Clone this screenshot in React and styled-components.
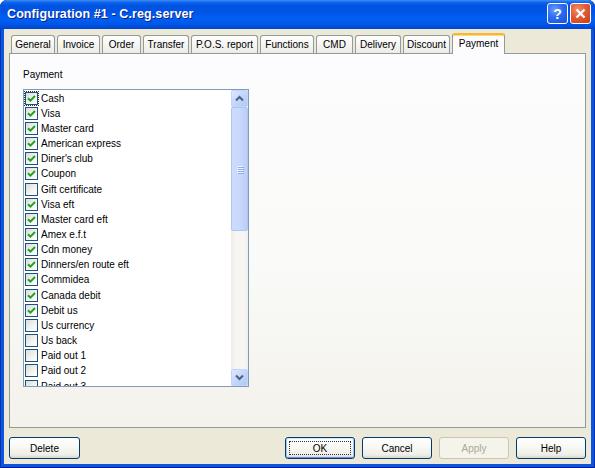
import React from "react";
import styled, { createGlobalStyle, css } from "styled-components";

const GlobalStyle = createGlobalStyle`
  html, body { margin: 0; padding: 0; background: #ffffff; }
  body { font-family: "Liberation Sans", Arial, sans-serif; }
  * { box-sizing: border-box; }
`;

const Window = styled.div`
  width: 595px;
  height: 468px;
  display: flex;
  flex-direction: column;
  background: #0a55e2;
  border-radius: 7px 7px 0 0;
  box-shadow: inset 1px 0 #0831a8, inset -1px 0 #0831a8, inset 0 -1px #00138c;
  overflow: hidden;
`;

const TitleBar = styled.div`
  height: 29px;
  flex: 0 0 29px;
  display: flex;
  align-items: center;
  justify-content: space-between;
  padding: 0 4px 0 7px;
  border-radius: 7px 7px 0 0;
  background: linear-gradient(
    to bottom,
    #3d8ff9 0%,
    #0d62ea 9%,
    #0053e2 20%,
    #0056e8 45%,
    #0160f2 62%,
    #0057ea 82%,
    #0045cf 100%
  );
`;

const Title = styled.div`
  color: #ffffff;
  font-family: "Liberation Sans", Arial, sans-serif;
  font-weight: bold;
  font-size: 12.5px;
  letter-spacing: 0.1px;
  text-shadow: 1px 1px 0 #0b2190;
  padding-bottom: 1px;
`;

const Controls = styled.div`
  display: flex;
  gap: 2px;
  padding-bottom: 2px;
`;

const CapButton = styled.div`
  width: 21px;
  height: 21px;
  border: 1px solid #ffffff;
  border-radius: 3px;
  display: flex;
  align-items: center;
  justify-content: center;
  color: #ffffff;
  font-weight: bold;
  font-size: 14px;
  ${(p) =>
    p.$kind === "close"
      ? css`
          background: radial-gradient(circle at 35% 30%, #f0906c 0%, #e35b35 45%, #c53c12 100%);
        `
      : css`
          background: radial-gradient(circle at 35% 30%, #6b9cf8 0%, #2a6cf0 45%, #1c4fd6 100%);
        `}
`;

const Client = styled.div`
  flex: 1;
  margin: 0 4px 4px 4px;
  background: #ece9d8;
  display: flex;
  flex-direction: column;
  padding: 0 5px;
`;

const TabStrip = styled.div`
  display: flex;
  align-items: flex-end;
  height: 24px;
  padding-left: 2px;
  position: relative;
  z-index: 2;
`;

const Tab = styled.div`
  width: ${(p) => p.$w}px;
  height: 18px;
  margin-right: 2px;
  border: 1px solid #919b9c;
  border-bottom: none;
  border-radius: 3px 3px 0 0;
  background: linear-gradient(to bottom, #ffffff 0%, #f7f7f4 40%, #ecebe6 100%);
  font-size: 10px;
  color: #000000;
  display: flex;
  align-items: center;
  justify-content: center;
  white-space: nowrap;
  ${(p) =>
    p.$active &&
    css`
      height: 21px;
      margin-bottom: -1px;
      background: #fcfcfe;
      border-top: 2px solid #f5b73c;
      align-items: flex-start;
      padding-top: 3px;
      box-shadow: inset 0 1px 0 #ffd87a;
    `}
`;

const Panel = styled.div`
  height: 375px;
  border: 1px solid #919b9c;
  background: linear-gradient(to bottom, #fcfcfe 0%, #fafaf8 55%, #f3f2ec 100%);
  padding: 15px 0 0 13px;
  display: flex;
  flex-direction: column;
  position: relative;
  z-index: 1;
`;

const GroupLabel = styled.div`
  font-size: 10px;
  line-height: 12px;
  color: #000;
  margin-bottom: 8px;
`;

const ListBox = styled.div`
  width: 226px;
  height: 298px;
  border: 1px solid #7f9db9;
  background: #ffffff;
  display: flex;
`;

const Items = styled.div`
  flex: 1;
  overflow: hidden;
  padding-top: 0.5px;
`;

const Row = styled.div`
  height: 15.17px;
  display: flex;
  align-items: center;
  padding-left: 1px;
  gap: 3px;
  font-size: 10px;
  color: #000;
  white-space: nowrap;
`;

const Box = styled.div`
  width: 13px;
  height: 13px;
  flex: 0 0 13px;
  border: 1px solid #1c5180;
  background: linear-gradient(135deg, #dcdcd7 0%, #f2f2ee 55%, #ffffff 100%);
  display: flex;
  align-items: center;
  justify-content: center;
  position: relative;
  ${(p) =>
    p.$focus &&
    css`
      outline: 1px dotted #333;
      outline-offset: 0px;
    `}
`;

const ScrollBar = styled.div`
  width: 17px;
  flex: 0 0 17px;
  display: flex;
  flex-direction: column;
  background: linear-gradient(to right, #eeede5 0%, #f7f6f2 30%, #f7f6f2 80%, #efeee8 100%);
`;

const ScrollBtn = styled.div`
  width: 17px;
  height: 17px;
  flex: 0 0 17px;
  border: 1px solid #c3d3fd;
  border-radius: 2px;
  background: linear-gradient(135deg, #dfe9ff 0%, #c4d6fc 50%, #b2c8f6 100%);
  display: flex;
  align-items: center;
  justify-content: center;
`;

const Track = styled.div`
  flex: 1;
  display: flex;
  flex-direction: column;
`;

const Thumb = styled.div`
  height: 124px;
  border: 1px solid #b1c5f3;
  border-radius: 2px;
  background: linear-gradient(to right, #cddbfd 0%, #c9d9fc 50%, #bccef8 100%);
  display: flex;
  flex-direction: column;
  align-items: center;
  justify-content: center;
  gap: 1px;
`;

const Grip = styled.div`
  width: 6px;
  height: 1px;
  background: #eef3ff;
  box-shadow: 1px 1px 0 #8faaf0;
`;

const ButtonRow = styled.div`
  display: flex;
  gap: 7px;
  margin-top: 9px;
`;

const Spacer = styled.div`
  flex: 1;
`;

const Btn = styled.div`
  width: ${(p) => p.$w || 70}px;
  height: 22px;
  border: 1px solid #003c74;
  border-radius: 3px;
  background: linear-gradient(to bottom, #ffffff 0%, #f7f7f3 50%, #eeede6 85%, #d8d3c7 100%);
  font-size: 10px;
  color: #000;
  display: flex;
  align-items: center;
  justify-content: center;
  position: relative;
  ${(p) =>
    p.$default &&
    css`
      box-shadow: inset 0 1px 0 #cee7ff, inset 1px 0 #a7c3f2, inset -1px 0 #a7c3f2, inset 0 -1px 0 #6982ee;
      &::after {
        content: "";
        position: absolute;
        inset: 3px;
        border: 1px dotted #333;
      }
    `}
  ${(p) =>
    p.$disabled &&
    css`
      border-color: #c9c7ba;
      background: #f5f4ea;
      color: #aca899;
    `}
`;

const tabs = [
  ["General", 44],
  ["Invoice", 43],
  ["Order", 39],
  ["Transfer", 46],
  ["P.O.S. report", 67],
  ["Functions", 54],
  ["CMD", 37],
  ["Delivery", 46],
  ["Discount", 47],
  ["Payment", 53, true],
];

const items = [
  ["Cash", true],
  ["Visa", true],
  ["Master card", true],
  ["American express", true],
  ["Diner's club", true],
  ["Coupon", true],
  ["Gift certificate", false],
  ["Visa eft", true],
  ["Master card eft", true],
  ["Amex e.f.t", true],
  ["Cdn money", true],
  ["Dinners/en route eft", true],
  ["Commidea", true],
  ["Canada debit", true],
  ["Debit us", true],
  ["Us currency", false],
  ["Us back", false],
  ["Paid out 1", false],
  ["Paid out 2", false],
  ["Paid out 3", false],
];

const Check = () => (
  <svg width="9" height="9" viewBox="0 0 9 9">
    <path d="M1 4.2 L3.4 6.6 L8 2" fill="none" stroke="#21a121" strokeWidth="2" />
  </svg>
);

const Chevron = ({ down }) => (
  <svg width="9" height="7" viewBox="0 0 9 7">
    <path
      d={down ? "M1 1.5 L4.5 5 L8 1.5" : "M1 5.5 L4.5 2 L8 5.5"}
      fill="none"
      stroke="#4d6185"
      strokeWidth="2"
    />
  </svg>
);

export default function App() {
  return (
    <>
      <GlobalStyle />
      <Window>
        <TitleBar>
          <Title>Configuration #1 - C.reg.server</Title>
          <Controls>
            <CapButton $kind="help">?</CapButton>
            <CapButton $kind="close">
              <svg width="11" height="11" viewBox="0 0 11 11">
                <path d="M1.5 1.5 L9.5 9.5 M9.5 1.5 L1.5 9.5" stroke="#fff" strokeWidth="2.2" />
              </svg>
            </CapButton>
          </Controls>
        </TitleBar>
        <Client>
          <TabStrip>
            {tabs.map(([label, w, active]) => (
              <Tab key={label} $w={w} $active={active}>
                {label}
              </Tab>
            ))}
          </TabStrip>
          <Panel>
            <GroupLabel>Payment</GroupLabel>
            <ListBox>
              <Items>
                {items.map(([label, on], i) => (
                  <Row key={label}>
                    <Box $focus={i === 0}>{on && <Check />}</Box>
                    {label}
                  </Row>
                ))}
              </Items>
              <ScrollBar>
                <ScrollBtn>
                  <Chevron />
                </ScrollBtn>
                <Track>
                  <Thumb>
                    <Grip />
                    <Grip />
                    <Grip />
                    <Grip />
                  </Thumb>
                </Track>
                <ScrollBtn>
                  <Chevron down />
                </ScrollBtn>
              </ScrollBar>
            </ListBox>
          </Panel>
          <ButtonRow>
            <Btn $w={71}>Delete</Btn>
            <Spacer />
            <Btn $default>OK</Btn>
            <Btn>Cancel</Btn>
            <Btn $disabled>Apply</Btn>
            <Btn>Help</Btn>
          </ButtonRow>
        </Client>
      </Window>
    </>
  );
}
